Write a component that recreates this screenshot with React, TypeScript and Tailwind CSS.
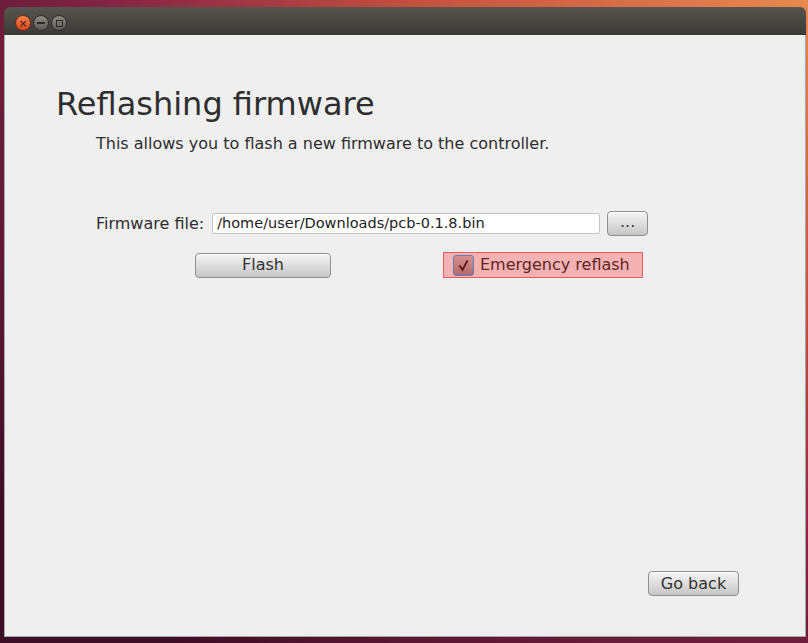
import React from 'react';

const font = { fontFamily: '"DejaVu Sans", Verdana, sans-serif' };

function Button({ children, className }: { children: React.ReactNode; className: string }) {
  return (
    <button
      className={`flex items-center justify-center rounded-[4px] border border-[#8f8f8f] bg-gradient-to-b from-[#f6f6f6] to-[#c6c6c6] text-[16px] text-[#333] shadow-[inset_0_1px_0_#fff] ${className}`}
    >
      {children}
    </button>
  );
}

export default function App() {
  return (
    <div
      className="w-[808px] h-[643px] overflow-hidden pt-[7px] px-[4px] bg-[radial-gradient(ellipse_at_100%_0%,#e8894f_0%,#c2503f_35%,#862646_60%,#3d0d25_90%)]"
      style={font}
    >
      <div className="w-[802px] h-[630px] flex flex-col rounded-t-[6px] overflow-hidden">
        {/* title bar */}
        <div className="h-[28px] shrink-0 flex items-start gap-[2px] pl-[11px] pt-[8px] bg-gradient-to-b from-[#55544f] to-[#3b3a36]">
          <div className="w-[16px] h-[16px] rounded-full bg-gradient-to-b from-[#f7824b] to-[#d9461c] border border-[#7a2c10] flex items-center justify-center text-[11px] leading-none text-[#3a1a0d]">
            ×
          </div>
          <div className="w-[16px] h-[16px] rounded-full bg-gradient-to-b from-[#8b8a85] to-[#5c5b57] border border-[#2e2d2a] flex items-center justify-center">
            <div className="w-[8px] h-[1.5px] bg-[#2b2a27]" />
          </div>
          <div className="w-[16px] h-[16px] rounded-full bg-gradient-to-b from-[#8b8a85] to-[#5c5b57] border border-[#2e2d2a] flex items-center justify-center">
            <div className="w-[7px] h-[7px] border border-[#2b2a27]" />
          </div>
        </div>

        {/* content */}
        <div className="flex-1 flex flex-col bg-[#efefef] border-x border-b border-[#a8a8a4] pt-[50px] pb-[40px]">
          <h1 className="pl-[51px] text-[32px] leading-[38px] text-[#2e2e2e]">Reflashing firmware</h1>
          <p className="mt-[12px] pl-[91px] text-[16px] leading-[18px] text-[#2e2e2e]">
            This allows you to flash a new firmware to the controller.
          </p>

          <div className="mt-[58px] pl-[91px] flex items-center h-[25px]">
            <span className="text-[16px] text-[#2e2e2e]">Firmware file:</span>
            <div className="ml-[8px] w-[388px] h-[21px] bg-white border border-[#c4c4c4] rounded-[2px] flex items-center pl-[4px] text-[14.5px] text-[#222]">
              /home/user/Downloads/pcb-0.1.8.bin
            </div>
            <Button className="ml-[7px] w-[41px] h-[25px] pb-[3px]">...</Button>
          </div>

          <div className="mt-[16px] pl-[190px] flex items-center">
            <Button className="w-[136px] h-[25px]">Flash</Button>
            <div className="ml-[112px] w-[200px] h-[26px] bg-[#f4b2b2] border border-[#ee5a5a] flex items-center pl-[9px] gap-[6px]">
              <div className="w-[21px] h-[21px] rounded-[3px] border border-[#5b7fc4] bg-gradient-to-b from-[#d69090] to-[#b46a6a] flex items-center justify-center">
                <svg width="13" height="13" viewBox="0 0 13 13">
                  <path d="M2.5 6.5 L5.5 11 L10.5 1.5" fill="none" stroke="#5a1818" strokeWidth="1.8" />
                </svg>
              </div>
              <span className="text-[16px] text-[#5e2626]">Emergency reflash</span>
            </div>
          </div>

          <div className="mt-auto flex justify-end pr-[66px]">
            <Button className="w-[91px] h-[25px]">Go back</Button>
          </div>
        </div>
      </div>
    </div>
  );
}
